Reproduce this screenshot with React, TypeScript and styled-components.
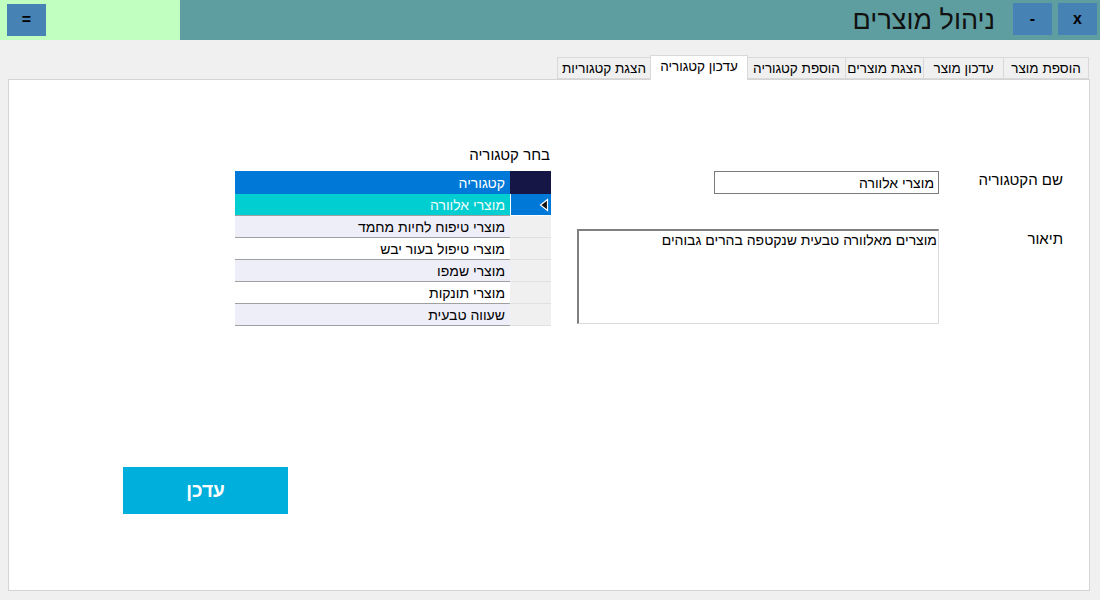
import React from "react";
import styled, { createGlobalStyle } from "styled-components";

const Global = createGlobalStyle`
  html, body { margin: 0; padding: 0; background: #f0f0f0; }
  body { font-family: "Liberation Sans", "DejaVu Sans", sans-serif; color: #000; }
  * { box-sizing: border-box; }
`;

const Page = styled.div`
  width: 1100px;
  height: 600px;
  background: #f0f0f0;
  overflow: hidden;
`;

const Header = styled.header`
  display: flex;
  height: 40px;
`;

const MenuZone = styled.div`
  width: 180px;
  background: #c0ffc0;
  padding: 4px 0 0 7px;
`;

const TitleZone = styled.div`
  flex: 1;
  background: #5f9ea0;
  display: flex;
  justify-content: flex-end;
  align-items: flex-start;
  padding: 3px 3px 0 0;
`;

const Title = styled.h1`
  margin: 0 18px 0 0;
  font-size: 27px;
  font-weight: normal;
  line-height: 34px;
  color: #111;
  direction: rtl;
`;

const WinButton = styled.button<{ $gap?: number }>`
  width: 39px;
  height: 32px;
  margin-left: ${(p) => p.$gap ?? 0}px;
  border: none;
  background: #4682b4;
  font-family: "Liberation Sans", sans-serif;
  font-weight: bold;
  font-size: 16px;
  color: #000;
  padding: 0;
  display: flex;
  align-items: center;
  justify-content: center;
`;

const TabStrip = styled.nav`
  display: flex;
  justify-content: flex-end;
  align-items: flex-end;
  height: 39px;
  padding-right: 11px;
  direction: ltr;
`;

const Tab = styled.div<{ $w: number; $active?: boolean }>`
  width: ${(p) => p.$w}px;
  height: ${(p) => (p.$active ? 25 : 22)}px;
  margin-bottom: ${(p) => (p.$active ? -1 : 0)}px;
  background: ${(p) => (p.$active ? "#ffffff" : "#f0f0f0")};
  border: 1px solid #d9d9d9;
  border-bottom: ${(p) => (p.$active ? "none" : "1px solid #d9d9d9")};
  margin-left: -1px;
  position: relative;
  z-index: ${(p) => (p.$active ? 2 : 1)};
  font-size: 13.5px;
  direction: rtl;
  display: flex;
  align-items: ${(p) => (p.$active ? "flex-start" : "center")};
  padding-top: ${(p) => (p.$active ? "3px" : "0")};
  justify-content: center;
  white-space: nowrap;
  color: #000;
`;

const Panel = styled.main`
  margin: 0 10px 0 8px;
  height: 512px;
  background: #fff;
  border: 1px solid #d4d4d4;
  position: relative;
  z-index: 1;
  padding-top: 66px;
`;

const MainRow = styled.div`
  display: flex;
  align-items: flex-start;
  padding-left: 226px;
`;

const GridBlock = styled.section`
  width: 316px;
  display: flex;
  flex-direction: column;
`;

const Caption = styled.div`
  direction: rtl;
  font-size: 15px;
  line-height: 18px;
  height: 18px;
  margin-bottom: 7px;
  padding-right: 1px;
`;

const Grid = styled.div`
  display: grid;
  grid-template-columns: 275px 41px;
  border-right: 1px solid #a0a0a0;
`;

const HeadCell = styled.div<{ $corner?: boolean }>`
  height: 23px;
  background: ${(p) => (p.$corner ? "#161646" : "#0078d7")};
  color: #fff;
  font-size: 14px;
  direction: rtl;
  display: flex;
  align-items: center;
  padding-right: 5px;
`;

const Cell = styled.div<{ $alt?: boolean; $sel?: boolean }>`
  height: 22px;
  background: ${(p) => (p.$sel ? "#00ced1" : p.$alt ? "#eeeef8" : "#ffffff")};
  color: ${(p) => (p.$sel ? "#f2fbfb" : "#000")};
  border-bottom: 1px solid #a0a0a0;
  font-size: 14px;
  direction: rtl;
  display: flex;
  align-items: center;
  padding-right: 5px;
  white-space: nowrap;
`;

const RowHead = styled.div<{ $sel?: boolean }>`
  height: 22px;
  background: ${(p) => (p.$sel ? "#0078d7" : "#f0f0f0")};
  border-left: 1px solid ${(p) => (p.$sel ? "#ffffff" : "#f0f0f0")};
  border-bottom: 1px solid ${(p) => (p.$sel ? "#ffffff" : "#e0e0e0")};
  display: flex;
  align-items: center;
  justify-content: flex-end;
  padding-right: 2px;
`;

const FormBlock = styled.section`
  margin-left: 26px;
  padding-top: 25px;
  display: grid;
  grid-template-columns: 362px 124px;
  row-gap: 35px;
`;

const FieldCell = styled.div`
  display: flex;
  justify-content: flex-end;
`;

const TextInput = styled.div`
  width: 225px;
  height: 23px;
  border: 1px solid #7a7a7a;
  background: #fff;
  direction: rtl;
  font-size: 14px;
  display: flex;
  align-items: center;
  padding-right: 4px;
`;

const TextArea = styled.div`
  width: 362px;
  height: 95px;
  border-top: 2px solid #7f7f7f;
  border-left: 2px solid #7f7f7f;
  border-right: 1px solid #dadada;
  border-bottom: 1px solid #dadada;
  background: #fff;
  direction: rtl;
  font-size: 14px;
  line-height: 17px;
  padding: 1px 1px 0 0;
`;

const Label = styled.div<{ $top: number }>`
  direction: rtl;
  font-size: 15px;
  line-height: 18px;
  padding-top: ${(p) => p.$top}px;
`;

const ActionButton = styled.button`
  display: block;
  margin: 141px 0 0 114px;
  width: 165px;
  height: 47px;
  border: none;
  background: #00afdb;
  color: #fff;
  font-family: "Liberation Sans", "DejaVu Sans", sans-serif;
  font-weight: bold;
  font-size: 19px;
  direction: rtl;
`;

const Arrow = () => (
  <svg width="10" height="14" viewBox="0 0 10 14">
    <path d="M8.5 1.5 L1.5 7 L8.5 12.5 Z" fill="#111" stroke="#fff" strokeWidth="1.2" />
  </svg>
);

const tabs = [
  { label: "הצגת קטגוריות", w: 94 },
  { label: "עדכון קטגוריה", w: 98, active: true },
  { label: "הוספת קטגוריה", w: 99 },
  { label: "הצגת מוצרים", w: 79 },
  { label: "עדכון  מוצר", w: 81 },
  { label: "הוספת  מוצר", w: 86 },
];

const rows = [
  "מוצרי אלוורה",
  "מוצרי טיפוח לחיות מחמד",
  "מוצרי טיפול בעור יבש",
  "מוצרי שמפו",
  "מוצרי תונקות",
  "שעווה טבעית",
];

export default function App() {
  return (
    <Page>
      <Global />
      <Header>
        <MenuZone>
          <WinButton>=</WinButton>
        </MenuZone>
        <TitleZone>
          <Title>ניהול מוצרים</Title>
          <WinButton>-</WinButton>
          <WinButton $gap={6}>x</WinButton>
        </TitleZone>
      </Header>
      <TabStrip>
        {tabs.map((t) => (
          <Tab key={t.label} $w={t.w} $active={t.active}>
            {t.label}
          </Tab>
        ))}
      </TabStrip>
      <Panel>
        <MainRow>
          <GridBlock>
            <Caption>בחר קטגוריה</Caption>
            <Grid>
              <HeadCell>קטגוריה</HeadCell>
              <HeadCell $corner />
              {rows.map((r, i) => (
                <React.Fragment key={r}>
                  <Cell $sel={i === 0} $alt={i % 2 === 1}>
                    {r}
                  </Cell>
                  <RowHead $sel={i === 0}>{i === 0 && <Arrow />}</RowHead>
                </React.Fragment>
              ))}
            </Grid>
          </GridBlock>
          <FormBlock>
            <FieldCell>
              <TextInput>מוצרי אלוורה</TextInput>
            </FieldCell>
            <Label $top={0}>שם הקטגוריה</Label>
            <FieldCell>
              <TextArea>מוצרים מאלוורה טבעית שנקטפה בהרים גבוהים</TextArea>
            </FieldCell>
            <Label $top={1}>תיאור</Label>
          </FormBlock>
        </MainRow>
        <ActionButton>עדכן</ActionButton>
      </Panel>
    </Page>
  );
}
